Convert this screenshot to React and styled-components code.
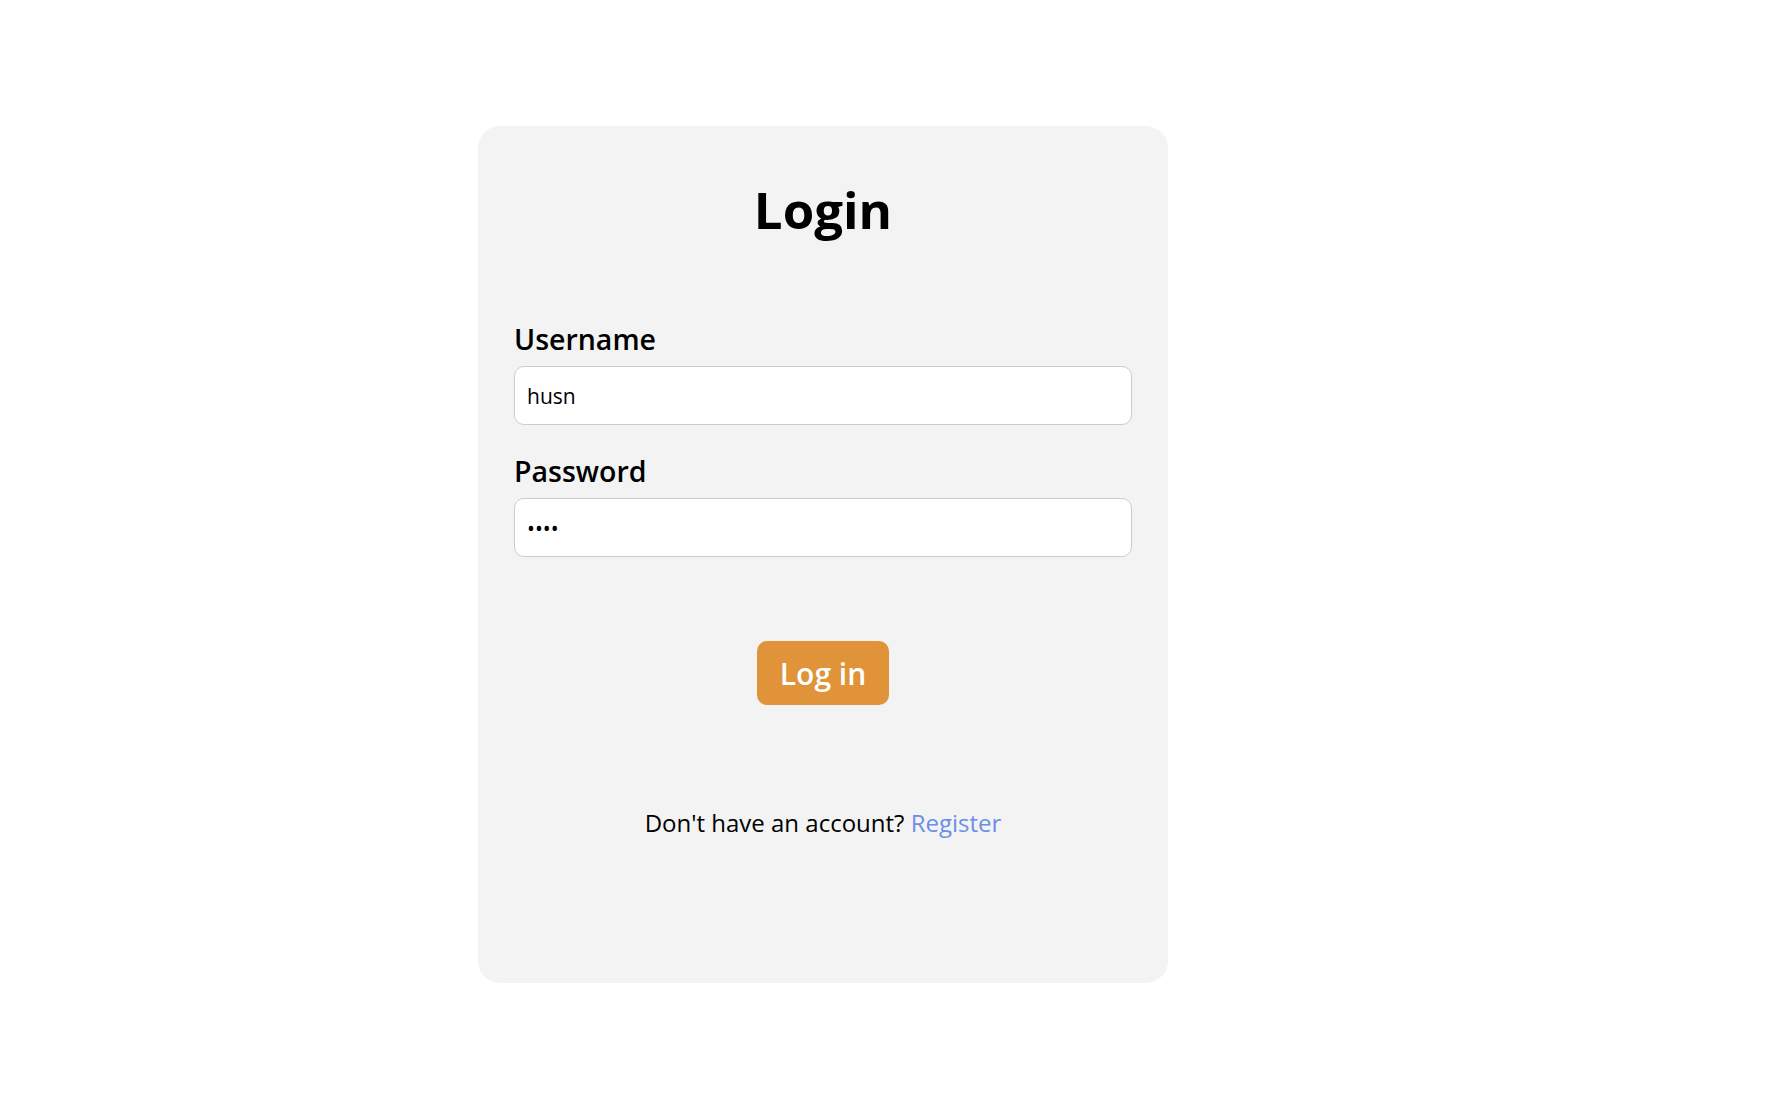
import { useState } from 'react'
import styled, { createGlobalStyle } from 'styled-components'

const GlobalStyle = createGlobalStyle`
  * {
    box-sizing: border-box;
  }
  body {
    margin: 0;
    background: #ffffff;
    font-family: 'Open Sans', 'Noto Sans', sans-serif;
    color: #000;
  }
`

const LoginPage = () => {
  const [username, setUsername] = useState('husn')
  const [password, setPassword] = useState('1234')

  const handleSubmit = (event) => {
    event.preventDefault()
  }

  return (
    <Page>
      <GlobalStyle />
      <Card>
        <Title>Login</Title>
        <Form onSubmit={handleSubmit}>
          <Field>
            <Label htmlFor='username'>Username</Label>
            <Input
              id='username'
              type='text'
              value={username}
              onChange={(e) => setUsername(e.target.value)}
            />
          </Field>
          <Field>
            <Label htmlFor='password'>Password</Label>
            <Input
              id='password'
              type='password'
              value={password}
              onChange={(e) => setPassword(e.target.value)}
            />
          </Field>
          <Button type='submit'>Log in</Button>
        </Form>
        <Footer>
          Don't have an account? <Link href='#'>Register</Link>
        </Footer>
      </Card>
    </Page>
  )
}

const Page = styled.div`
  min-height: 100vh;
  padding: 126px 0 0 478px;
`

const Card = styled.div`
  width: 690px;
  height: 857px;
  background: #f3f3f3;
  border-radius: 22px;
  padding: 50px 36px 0;
  display: flex;
  flex-direction: column;
`

const Title = styled.h1`
  margin: 0;
  text-align: center;
  font-size: 51px;
  font-weight: 700;
  line-height: 1.3;
`

const Form = styled.form`
  display: flex;
  flex-direction: column;
  margin-top: 79px;
`

const Field = styled.div`
  display: flex;
  flex-direction: column;
  margin-bottom: 28px;
`

const Label = styled.label`
  font-size: 28.5px;
  font-weight: 600;
  line-height: 1.3;
  margin-bottom: 8px;
`

const Input = styled.input`
  width: 100%;
  height: 59px;
  padding: 0 12px;
  border: 1px solid #cccccc;
  border-radius: 10px;
  background: #ffffff;
  font-family: inherit;
  font-size: 21px;
  color: #000;
  outline: none;
`

const Button = styled.button`
  align-self: center;
  margin-top: 56px;
  width: 132px;
  height: 64px;
  border: none;
  border-radius: 10px;
  background: #e09338;
  color: #ffffff;
  font-family: inherit;
  font-size: 30px;
  font-weight: 600;
  cursor: pointer;
`

const Footer = styled.p`
  margin: 101px 0 0;
  text-align: center;
  font-size: 24px;
`

const Link = styled.a`
  color: #6b8fe8;
  text-decoration: none;
`

export default LoginPage
